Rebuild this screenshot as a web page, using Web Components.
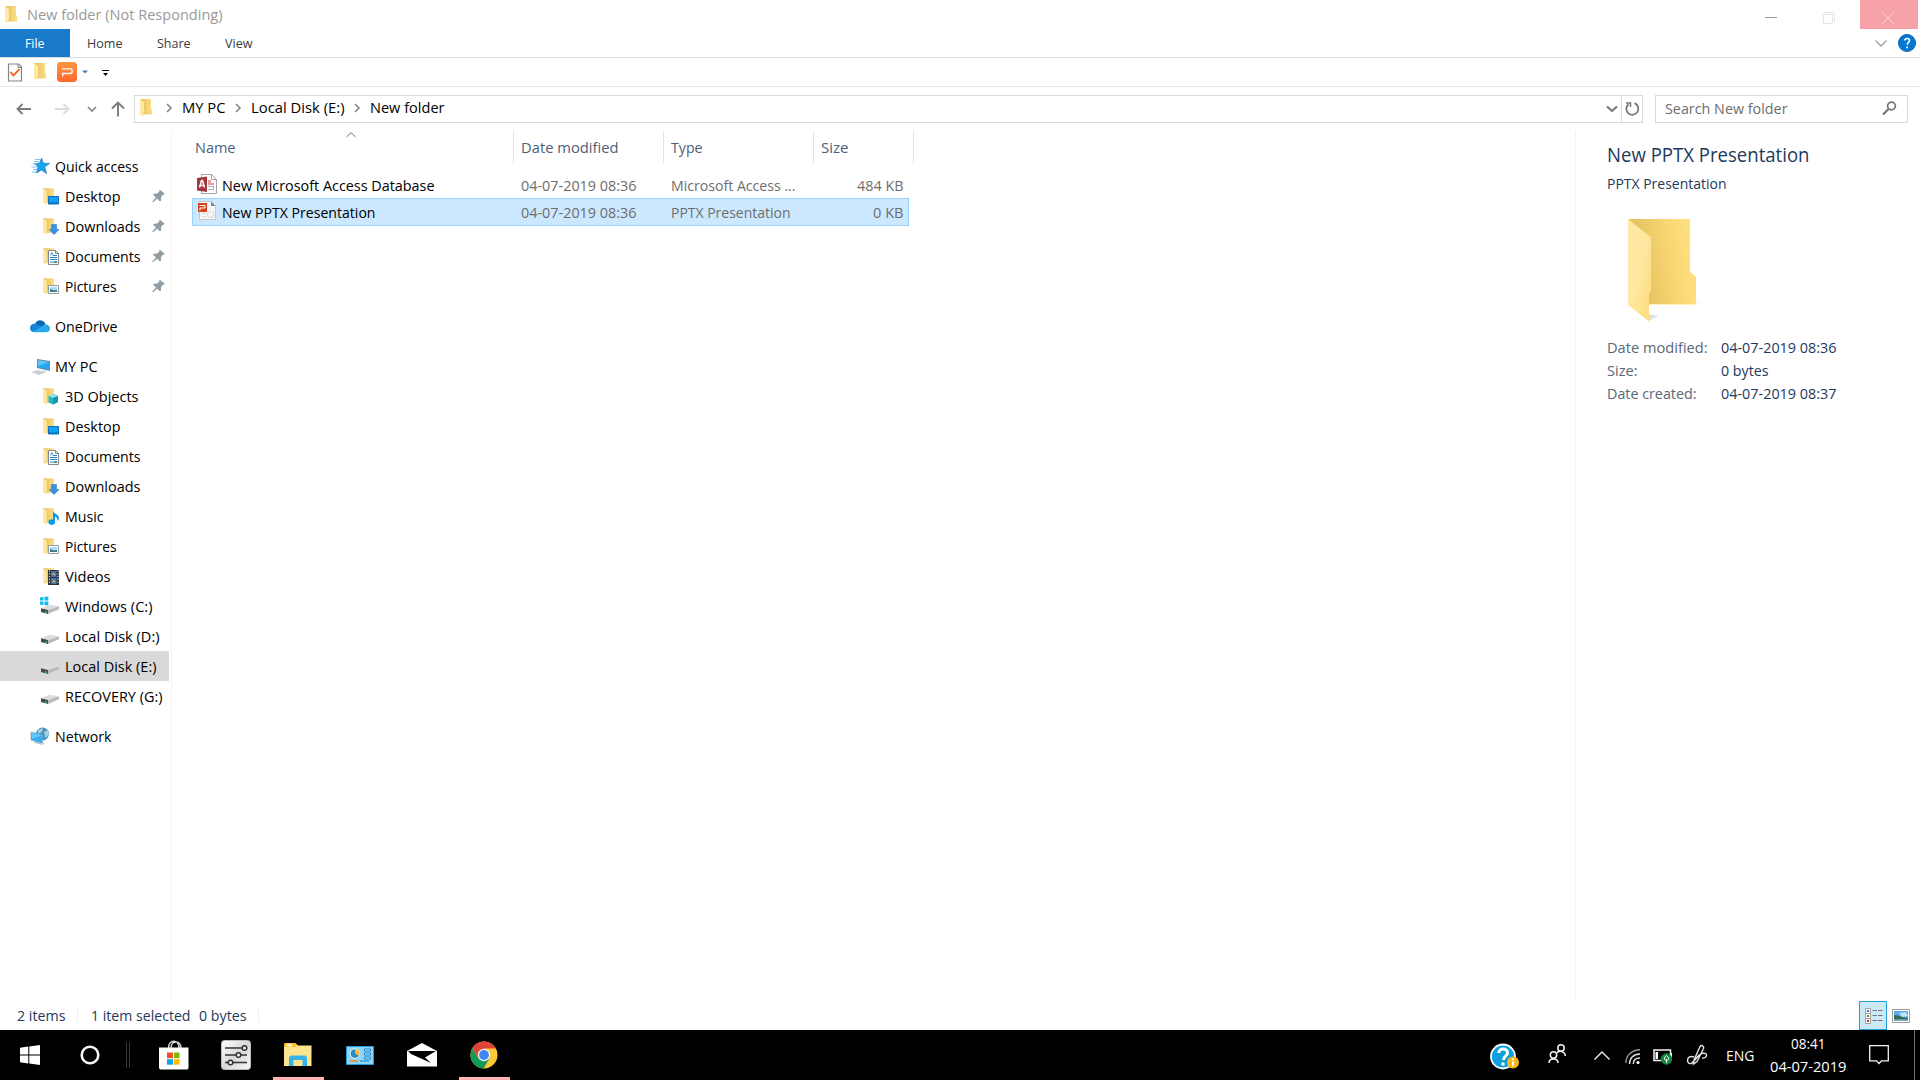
<!DOCTYPE html>
<html lang="en">
<head>
<meta charset="utf-8">
<title>New folder</title>
<style>
  body {
    margin: 0;
    width: 1920px;
    height: 1080px;
    overflow: hidden;
    background: #fff;
    font: 15px/20px "Open Sans", "Noto Sans", sans-serif;
    color: #000;
  }
</style>
</head>
<body>
<explorer-window>
  <title-bar slot="top"></title-bar>
  <ribbon-tabs slot="top"></ribbon-tabs>
  <quick-toolbar slot="top"></quick-toolbar>
  <address-row slot="top"></address-row>
  <nav-pane></nav-pane>
  <file-list></file-list>
  <preview-pane></preview-pane>
  <status-bar slot="bottom"></status-bar>
</explorer-window>
<task-bar></task-bar>

<script>
const folderPart = `
  <path d="M3 2.3H14V16.8H3z" fill="url(#f)"/>
  <path d="M3 2.3 6.8 5.2V15l-.4.5V19L3 16.4z" fill="#ffe79c"/>`;

const folderGradient = `
  <linearGradient id="f"><stop offset="0.2" stop-color="#e9c566"/><stop offset="1" stop-color="#fddf80"/></linearGradient>`;

const drivePart = `
  <path d="M1 12.300 9.500 8.700 19 10.300 8 14z" fill="#dcdcdc"/>
  <path d="M8 14 19 10.300V13.300L8 18z" fill="#b9babc"/>
  <path d="M1 12.300 8 14V18L1 16z" fill="#474a4b"/>
  <path d="M5 15.300l2 .5v1.200l-2-.5z" fill="#34e04c"/>`;

// [width, height, svg body]
const icons = {
  folder: [12, 18, `<defs><linearGradient id="a"><stop offset=".2" stop-color="#e9c566"/><stop offset="1" stop-color="#ffe084"/></linearGradient></defs>
    <path d="M0 0H11V9.5L12 10.5V15.5H0z" fill="url(#a)"/><path d="M0 0 4 3.3V12.5l-.5.5V17.5L0 14.8z" fill="#ffe9a3"/>`],
  bigFolder: [76, 103, `<defs>
      <linearGradient id="b" x1="0" y1=".6" x2="1" y2=".4"><stop offset=".2" stop-color="#e6c262"/><stop offset=".65" stop-color="#f8d873"/><stop offset="1" stop-color="#ffe083"/></linearGradient>
      <linearGradient id="c" x1="0" y1="0" x2="1" y2="1"><stop offset="0" stop-color="#ffe9a6"/><stop offset=".5" stop-color="#ffe7a0"/><stop offset="1" stop-color="#fddb78"/></linearGradient>
      <linearGradient id="s"><stop offset="0" stop-color="#ddd"/><stop offset="1" stop-color="#fff"/></linearGradient></defs>
    <path d="M67 80 77 82 66 86zM20 95 31 97 20 102z" fill="url(#s)"/>
    <path d="M0 0H61L62 1V52.5L68 58V84L67 86H0z" fill="url(#b)"/>
    <path d="M0 0 23 18.5V72L21 75V102.500L0 86z" fill="url(#c)"/><path d="M21 85.500H67" stroke="#fff0b8"/>`],
  star: [20, 20, `<path d="M11.500 2 13.300 7.200 19.500 7.500 14.700 11 16.500 17.500 11.500 14 6.500 17 8 11 4.500 7.600 9.600 7.200z" fill="#19a4ee" stroke="#2277b5" stroke-width=".7"/><path d="M5 3.500h5M4 5.500h5M3 8h4M1.500 11h5M3 13.500h4M2 16h4" stroke="#76c5f2"/>`],
  desktop: [20, 20, `${folderPart}<path d="M8.500 10.500h10v7.500h-10z" fill="#159ff5" stroke="#0870bc"/><path d="M9 17h9" stroke="#064f82" stroke-dasharray="2 1"/>`],
  downloads: [20, 20, `${folderPart}<path d="M11.500 8.500h5v5h2.500L14 18.500 9.200 13.500H11.500z" fill="#3692e5" stroke="#2778c7" stroke-width=".6"/>`],
  documents: [20, 20, `${folderPart}<path d="M8.500 4.500h7L18.500 7.500V18.500H8.500z" fill="#fff" stroke="#858a8e"/><path d="M15.500 4.500v3h3" fill="none" stroke="#858a8e"/><path d="M13 9.500h4M10 11.500h7M10 13.500h7" stroke="#2786cf"/><path d="M10.500 9.500 12 6.500 12.800 9.500" fill="none" stroke="#2786cf" stroke-width=".8"/><path d="M10 16h3" stroke="#2786cf"/><path d="M13.500 16h3.500" stroke="#558f7f" stroke-width="2"/>`],
  pictures: [20, 20, `${folderPart}<path d="M8.500 9.500h10v8h-10z" fill="#fff" stroke="#969da2"/><path d="M10 11h7v5h-7z" fill="#aadcf8"/><path d="M10 13 14 14.500 17 14v2H10z" fill="#397877"/>`],
  objects: [20, 20, `${folderPart}<path d="M8.500 10 14 8 18 10v6l-5 2.500-4.500-2z" fill="#25b6c8"/><path d="M8.500 10 14 8 18 10 13 12z" fill="#8be7ef"/><path d="M13 12 18 10v6l-5 2.500z" fill="#129aab"/>`],
  music: [20, 20, `${folderPart}<path d="M13 4c0 4 6 4 6 8 0 1-.5 2-1.500 3 .3-3-1.500-4-2.500-4.500V16a3.300 2.800 0 1 1-2-2.500z" fill="#0799ee"/>`],
  videos: [20, 20, `${folderPart}<path d="M8 4h11v15H8z" fill="#303436"/><path d="M11 5h5.500v6H11zM11 12h5.500v6H11z" fill="#3678bf"/><path d="M11.500 8.500 14 6.500 16 9.500zM11.500 16 14 13.500 16 16.500z" fill="#e8a33d"/><path d="M9.500 4.500v14M18 4.500v14" stroke="#ddd" stroke-dasharray="1.300 1.500"/>`],
  onedrive: [20, 20, `<path d="M5 8.500C6.500 3 13 3 15.500 8L10 12z" fill="#0765b8"/><path d="M0 12c0-4 4-5 6.500-4L14 12 3 16c-2-.5-3-2-3-4" fill="#1687d8"/><path d="M3 16 14.500 8.500C19 8 20 11 20 12.500 20 15 18 16.200 16 16.200H4z" fill="#28a8ea"/>`],
  pc: [20, 20, `<path d="M7 3 20 5V15L7 12z" fill="#6f8b9e"/><path d="M8 4.300 18.800 6V13.700L8 11.300z" fill="#28a8ef"/><path d="M8 4.300 18.800 6 8 10z" fill="#62c5fa"/><path d="M1 16 8 14 15 16.500 9 19zM12 14 17 15.500 14 16.500z" fill="#c9ced4"/>`],
  drive: [20, 20, drivePart],
  winDrive: [20, 20, `<path d="M0 1.500 3.500 1V4.500H0zM4.500 1 8.300.500V4.500H4.500zM0 5.500H3.500V9L0 8.500zM4.500 5.500H8.300V9.500L4.500 9z" fill="#0dbaf2"/>${drivePart}`],
  network: [20, 20, `<circle cx="12.500" cy="8" r="6.500" fill="#4594bd"/><path d="M8 4 13 2 12 6 8 8zM14 6 18 4 19 9 15 12z" fill="#a4d1df"/><path d="M1 6 12.500 9V17.500L1 14z" fill="#36adec" stroke="#6caed3" stroke-width=".7"/><path d="M1.500 6.500 12 9.500 2 13z" fill="#64c6fb"/><path d="M4 16l7 2 3-.5" stroke="#bcc5ca" stroke-width="1.500" fill="none"/>`],
  pin: [13, 14, `<path d="M7.500.5 12.500 4.500 11.500 6 10.500 6 9 8.500V11.500L8 12.500 5.200 9.700 1 13.300.2 12.600 4 8.500 1 5.800 2 4.700 5.200 4.600 7.300 2.500z" fill="#919da5"/>`],
  check: [16, 19, `<path d="M1.500 1H11.500L14.500 4V18H1.500z" fill="#fafafa" stroke="#858585" stroke-width="1.200"/><path d="M11 1v3.500h4" fill="none" stroke="#858585"/><path d="M3.500 9 6.500 12.500 12.500 6" fill="none" stroke="#f05a16" stroke-width="1.800"/>`],
  wps: [20, 20, `<defs><linearGradient id="w" x2="0" y2="1"><stop stop-color="#ff963f"/><stop offset="1" stop-color="#ff672d"/></linearGradient></defs><rect width="20" height="20" rx="3.500" fill="url(#w)"/><path d="M5 6.800H14.200L15 7.600V10.700L14.200 11.500H5.700V14.500" fill="none" stroke="#fff" stroke-width="1.300"/>`],
  smallDown: [6, 4, `<path d="M0 .500H6L3 3.500z" fill="#407abf"/>`],
  custom: [8, 7, `<path d="M0 .500h7" stroke="#000"/><path d="M1 3h5L3.500 6z" fill="#000"/>`],
  back: [16, 14, `<path d="M6.500 2 1.500 7 6.500 12M1.500 7H15" fill="none" stroke="#7b7b7b" stroke-width="1.800"/>`],
  forward: [16, 14, `<path d="M9.500 2 14.500 7 9.500 12M14.500 7H1" fill="none" stroke="#dcdcdc" stroke-width="1.800"/>`],
  recent: [10, 7, `<path d="M1 1 5 5 9 1" fill="none" stroke="#868686" stroke-width="1.700"/>`],
  up: [14, 16, `<path d="M1 7.500 7 1.500 13 7.500M7 2V15.500" fill="none" stroke="#7b7b7b" stroke-width="1.900"/>`],
  crumb: [6, 10, `<path d="M1 1 5 5 1 9" fill="none" stroke="#818181" stroke-width="1.500"/>`],
  drop: [12, 8, `<path d="M1 1.500 6 6 11 1.500" fill="none" stroke="#757575" stroke-width="2"/>`],
  refresh: [15, 15, `<path d="M9.500 2.200A6 6 0 1 1 3.500 3.200" fill="none" stroke="#777" stroke-width="1.800"/><path d="M1 2H5.500V6" fill="none" stroke="#777" stroke-width="1.500"/>`],
  search: [15, 15, `<circle cx="9.500" cy="5" r="3.900" fill="none" stroke="#747474" stroke-width="1.700"/><path d="M6.500 8 1 13.500" stroke="#747474" stroke-width="2.200"/>`],
  minimize: [12, 1, `<path d="M0 .500H12" stroke="#999"/>`],
  restore: [12, 12, `<path d="M.500 2.500H9.500V11.500H.500zM2.500 2.500V.500H11.500V9.500H9.500" fill="none" stroke="#e7e7e7"/>`],
  close: [12, 12, `<path d="M.500.500 11.500 11.500M11.500.500.500 11.500" stroke="#fdd4d6"/>`],
  ribbonDown: [12, 7, `<path d="M.500.500 6 6 11.500.500" fill="none" stroke="#9d9d9d" stroke-width="1.300"/>`],
  help: [18, 18, `<circle cx="9" cy="9" r="8.500" fill="#0078d7" stroke="#1764a5"/><path d="M6.700 6.500C7 3.800 11.500 3.800 11.500 6.500 11.500 8.300 9.200 8.400 9.200 10.800" fill="none" stroke="#fff" stroke-width="1.600"/><path d="M8.300 12.500h1.800v1.800H8.300z" fill="#fff"/>`],
  sort: [10, 6, `<path d="M.500 5 5 .700 9.500 5" fill="none" stroke="#6e6e6e"/>`],
  access: [20, 20, `<path d="M4.500.500H14.500L19.500 5.500V19.500H4.500z" fill="#fff" stroke="#a3a3a3"/><path d="M14.500.500V5.500H19.500" fill="none" stroke="#a3a3a3"/><path d="M11 6h3v3h3v2h-6z" fill="#f09ba0"/><path d="M11 12.500h5.500v3H11" fill="none" stroke="#aaa"/><path d="M0 4 10 2.500V18L0 16.500z" fill="#a4373a"/><path d="M2.500 13.500 4.500 6.500H5.500L7.500 13.500M3.500 11.500H6.500" fill="none" stroke="#fff" stroke-width="1.500"/>`],
  pptx: [20, 20, `<path d="M2.500.500H14L18.500 5V18.500H2.500z" fill="#f7f7f7" stroke="#c8c8c8"/><path d="M14 .500 18.500 5H14z" fill="#858585"/><path d="M5 12.500h4M5 15.500h4M10.500 11h6v5h-6z" fill="none" stroke="#ddd"/><path d="M1 2h9v9H1z" fill="#d5451d"/><path d="M2.500 4.500h5.500v2.500H3v2.500" fill="none" stroke="#fff"/>`],
  details: [18, 16, `<path d="M.500.500h5v15h-5zM.500 5.500h5M.500 10.500h5" fill="#fff" stroke="#a2a2a2"/><path d="M2 2h2v2H2z" fill="#2b79bf"/><path d="M2 7h2v2H2z" fill="#758b36"/><path d="M2 12h2v2H2z" fill="#b6341f"/><path d="M7.500 2.500h5M13 2.500h5M7.500 7.500h5M13 7.500h5M7.500 12.500h5M13 12.500h5" stroke="#777" stroke-dasharray="4.500 1"/>`],
  thumb: [18, 14, `<path d="M.500.500h17v13H.500z" fill="#fff" stroke="#9c9c9c"/><path d="M2 2h14v10H2z" fill="#5aa8ed"/><path d="M7 4 14 3 16 7 10 8z" fill="#bfe2f7"/><path d="M2 6 6 6.500 12 8.500 16 9v1.500H2z" fill="#376b58"/><path d="M2 10.500h14V12H2z" fill="#7cacaf"/>`],
  start: [20, 20, `<path d="M0 2.800 8.300 1.600V9.500H0zM9.300 1.500 20 0V9.500H9.300zM0 10.500H8.300V18.500L0 17.300zM9.300 10.500H20V20L9.300 18.600z" fill="#fff"/>`],
  cortana: [20, 20, `<circle cx="10" cy="10" r="8.300" fill="none" stroke="#f4f4f4" stroke-width="2.600"/>`],
  store: [30, 30, `<path d="M9.500 8C9.500-1 20-1 20 8M12 8C12 0 22 0 22 8" fill="none" stroke="#ddd" stroke-width="1.500"/><path d="M0 7.500H29.500V28L28.500 29.500H1L0 28z" fill="#fff"/><path d="M8 12.500h6v5.700H8z" fill="#f25022"/><path d="M15 12.500h5.500v5.700H15z" fill="#7fba00"/><path d="M8 19.200h6v5.500H8z" fill="#00a4ef"/><path d="M15 19.200h5.500v5.500H15z" fill="#ffb900"/>`],
  sliders: [30, 30, `<defs><linearGradient id="g" x2="1" y2="1"><stop stop-color="#fff"/><stop offset=".5" stop-color="#d8d8d8"/><stop offset="1" stop-color="#fafafa"/></linearGradient></defs><rect x=".500" y=".500" width="29" height="29" rx="3" fill="url(#g)" stroke="#bbb"/><path d="M4 8H26M4 15H26M4 22.500H26" stroke="#333" stroke-width="1.700"/><g fill="#eee" stroke="#333" stroke-width="1.500"><circle cx="23.500" cy="8" r="2.300"/><circle cx="17.500" cy="15" r="2.300"/><circle cx="9.500" cy="22.500" r="2.300"/></g>`],
  explorer: [28, 24, `<path d="M0 1.500 1 0H11L14 2.500H27.500V23H0z" fill="#ffe48f"/><path d="M0 1.500 1 0H11L13.500 2 11 4H0z" fill="#f9c52a"/><path d="M3 1.300h5v2H3z" fill="#fff"/><path d="M5 23V14L7 12.500H21L23 14V23H18.500V17H9.500V23z" fill="#36b3e9"/>`],
  panel: [28, 19, `<path d="M.500.500h27v18H.500z" fill="#8ed4f8" stroke="#239adf"/><circle cx="9" cy="7.500" r="4.800" fill="#2a88c4" stroke="#e8f9ff"/><path d="M9 7.500V2.800A4.800 4.800 0 0 1 13 10z" fill="#f8b83e"/><path d="M18.500 3h6v2h-6zM18.500 7h6v2h-6zM18.500 11h6v2h-6z" fill="#d5f3ff" stroke="#1682c6"/><path d="M4 15h8" stroke="#ef8b20" stroke-width="1.500"/><path d="M14 15h9" stroke="#1682c6"/>`],
  mail: [30, 24, `<path d="M0 8 15 0 30 8V23.500H0z" fill="#fff"/><path d="M1 8H29L18 14.500 24 20 4 11z" fill="#000"/>`],
  chrome: [28, 28, `<circle cx="14" cy="14" r="13.500" fill="#fcc934"/><path d="M2.300 7.200A13.500 13.500 0 0 1 25.700 7.500H14L8.400 17.300z" fill="#db4437"/><path d="M2.300 7.200A13.500 13.500 0 0 0 13.500 27.500L19.500 17.500 14 20 8 17z" fill="#109b58"/><circle cx="14" cy="14" r="6.200" fill="#f1f1f1"/><circle cx="14" cy="14" r="4.900" fill="#4285f4"/>`],
  assist: [30, 28, `<circle cx="13" cy="13.500" r="12" fill="#0ba1e1" stroke="#fff" stroke-width="1.800"/><path d="M8.800 10C8.800 4.500 17.500 4.500 17.500 10 17.500 13 13.500 13 13.500 17" fill="none" stroke="#fff" stroke-width="3"/><circle cx="13" cy="21" r="1.800" fill="#fff"/><circle cx="23" cy="19.500" r="6" fill="#f8b621"/><path d="M23 18.500V23M23 15.500v1.800" stroke="#fff" stroke-width="2"/>`],
  people: [18, 20, `<g fill="none" stroke="#f2f2f2" stroke-width="1.500"><circle cx="13" cy="4" r="3.200"/><circle cx="5.500" cy="11" r="3.200"/><path d="M1 19C1 13.500 10 13.500 10 19M9 8.500C13 6 17 8 17.300 12"/></g>`],
  trayUp: [16, 9, `<path d="M.500 8.500 8 1 15.500 8.500" fill="none" stroke="#f0f0f0" stroke-width="1.400"/>`],
  wifi: [16, 16, `<g fill="none" stroke-width="1.400"><path d="M.800 14C1 6 7 1 15 .800" stroke="#999"/><path d="M4.500 15C4.500 9 8.500 5 15 5M8.300 15C8.300 11.500 10.500 9 15 9" stroke="#ddd"/></g><circle cx="13" cy="13.500" r="1.600" fill="#fff"/>`],
  battery: [20, 16, `<path d="M1 1H17.500V11.500H1z" fill="none" stroke="#f4f4f4" stroke-width="1.500"/><path d="M2.500 3H5v7H2.500z" fill="#fff"/><path d="M18.500 4v5" stroke="#fff"/><circle cx="13.500" cy="10" r="5.700" fill="#10893e"/><path d="M13.500 14V10M11.500 10C11 8 13 7.500 13.500 6.500 14 7.500 16 8 15.500 10 15 12 12 12 11.500 10z" fill="none" stroke="#fff"/>`],
  pen: [20, 21, `<path d="M13 1.500C14.500-.500 17.500 1 16.500 3.500L10 16.500 6.500 19 7 15zM7 12C-1 9-1 20 4 18.500 8 17 10 10 15 8.500 22 7 20 14 15 13" fill="none" stroke="#e3e3e3" stroke-width="1.400"/>`],
  action: [20, 20, `<path d="M.700.700H19.300V15.800H12.500L10 18.500 7.500 15.800H.700z" fill="none" stroke="#f5f5f5" stroke-width="1.300"/>`],
};

class WinIcon extends HTMLElement {
  constructor() {
    super();
    this.attachShadow({ mode: "open" });
  }

  connectedCallback() {
    const [w, h, body] = icons[this.getAttribute("name")];
    this.shadowRoot.innerHTML = `
      <style>
        :host { display: block; flex: none; width: ${w}px; height: ${h}px; }
        svg { display: block; overflow: visible; }
      </style>
      <svg width="${w}" height="${h}" viewBox="0 0 ${w} ${h}"><defs>${folderGradient}</defs>${body}</svg>
    `;
  }
}
customElements.define("win-icon", WinIcon);

// Label squeezed to the width given in its "w" attribute.
// --dy nudges the baseline.
class FitText extends HTMLElement {
  constructor() {
    super();
    this.attachShadow({ mode: "open" });
  }

  connectedCallback() {
    const w = Number(this.getAttribute("w"));
    this.shadowRoot.innerHTML = `
      <style>
        :host { display: block; flex: none; width: ${w}px; white-space: nowrap; }
        span { display: inline-block; transform-origin: 0 50%; }
      </style>
      <span><slot></slot></span>
    `;
    const span = this.shadowRoot.querySelector("span");
    const scale = (w + 0.5) / span.getBoundingClientRect().width;
    span.style.transform = `translateY(var(--dy, -1px)) scaleX(${scale})`;
  }
}
customElements.define("fit-text", FitText);

const define = (name, css, html) => {
  customElements.define(
    name,
    class extends HTMLElement {
      constructor() {
        super();
        this.attachShadow({ mode: "open" });
      }

      connectedCallback() {
        this.shadowRoot.innerHTML = `<style>${css}</style>${html}`;
      }
    },
  );
};

define(
  "explorer-window",
  `
  :host { display: flex; flex-direction: column; height: 1030px; background: #fff; }
  .body { flex: 1; display: flex; min-height: 0; }
  `,
  `<slot name="top"></slot><div class="body"><slot></slot></div><slot name="bottom"></slot>`,
);

define(
  "title-bar",
  `
  :host { display: flex; height: 29px; color: #999; }
  .folder { margin: 6px 10px 0 5px; }
  fit-text { margin-top: 5px; }
  .buttons { margin-left: auto; display: flex; }
  .min { margin: 17px 46px 0 0; }
  .restore { margin: 12px 25px 0 0; }
  .close { width: 58px; height: 29px; margin-right: 2px; background: #f7a1a8; display: grid; justify-content: center; padding-top: 12px; box-sizing: border-box; }
  .close win-icon { margin-right: 2px; }
  `,
  `
  <win-icon class="folder" name="folder"></win-icon>
  <fit-text w="195">New folder (Not Responding)</fit-text>
  <div class="buttons">
    <win-icon class="min" name="minimize"></win-icon>
    <win-icon class="restore" name="restore"></win-icon>
    <div class="close"><win-icon name="close"></win-icon></div>
  </div>
  `,
);

define(
  "ribbon-tabs",
  `
  :host { --dy: 0px; display: flex; height: 28px; border-bottom: 1px solid #dadbdc; font-size: 13px; line-height: 29px; color: #3b3b3b; }
  .file { width: 69px; padding-right: 1px; background: #1979ca; color: #fff; display: flex; justify-content: center; }
  .home { margin-left: 17px; }
  .share { margin-left: 35px; }
  .view { margin-left: 35px; }
  .down { margin: 11px 11px 0 auto; }
  .help { margin: 5px 4px 0 0; }
  `,
  `
  <div class="file"><fit-text w="19">File</fit-text></div>
  <fit-text class="home" w="35">Home</fit-text>
  <fit-text class="share" w="33">Share</fit-text>
  <fit-text class="view" w="27">View</fit-text>
  <win-icon class="down" name="ribbonDown"></win-icon>
  <win-icon class="help" name="help"></win-icon>
  `,
);

define(
  "quick-toolbar",
  `
  :host { display: flex; align-items: center; height: 28px; border-bottom: 1px solid #e7e7e7; padding-left: 7px; }
  .folder { margin: 0 11px; }
  .down { margin: 0 14px 0 5px; }
  .custom { margin-top: 3px; }
  `,
  `
  <win-icon name="check"></win-icon>
  <win-icon class="folder" name="folder"></win-icon>
  <win-icon name="wps"></win-icon>
  <win-icon class="down" name="smallDown"></win-icon>
  <win-icon class="custom" name="custom"></win-icon>
  `,
);

define(
  "address-row",
  `
  :host { display: flex; align-items: center; height: 44px; padding: 0 12px 0 16px; box-sizing: border-box; }
  .forward { margin-left: 22px; }
  .recent { margin-left: 17px; }
  .up { margin: 0 9px 0 14px; }
  .box { display: flex; align-items: center; box-sizing: border-box; height: 28px; border: 1px solid #d9d9d9; margin-bottom: 1px; }
  .address { width: 1509px; padding-left: 5px; }
  .folder { margin: 0 14px 2px 0; }
  .crumbs { display: flex; align-items: center; gap: 10px; margin-bottom: 2px; }
  .drop { margin-left: auto; margin-right: 3px; }
  .refresh { height: 26px; width: 20px; border-left: 1px solid #d9d9d9; display: grid; place-items: center; }
  .search { width: 253px; margin-left: auto; padding: 0 11px 0 9px; justify-content: space-between; color: #6d6d6d; }
  .search win-icon { margin-right: -1px; }
  `,
  `
  <win-icon name="back"></win-icon>
  <win-icon class="forward" name="forward"></win-icon>
  <win-icon class="recent" name="recent"></win-icon>
  <win-icon class="up" name="up"></win-icon>
  <div class="box address">
    <win-icon class="folder" name="folder"></win-icon>
    <div class="crumbs">
      <win-icon name="crumb"></win-icon><fit-text w="43">MY PC</fit-text>
      <win-icon name="crumb"></win-icon><fit-text w="93">Local Disk (E:)</fit-text>
      <win-icon name="crumb"></win-icon><fit-text w="74">New folder</fit-text>
    </div>
    <win-icon class="drop" name="drop"></win-icon>
    <div class="refresh"><win-icon name="refresh"></win-icon></div>
  </div>
  <div class="box search"><fit-text w="122">Search New folder</fit-text><win-icon name="search"></win-icon></div>
  `,
);

define(
  "nav-item",
  `
  :host { display: flex; align-items: center; width: 169px; height: 30px; padding-left: 30px; gap: 5px; box-sizing: border-box; }
  :host([child]) { padding-left: 40px; gap: 5px; }
  :host([selected]) { background: #d9d9d9; }
  ::slotted(fit-text) { margin-top: 1px; }
  ::slotted(.pin) { margin-left: auto; margin-right: 4px; }
  `,
  `<slot></slot>`,
);

const navGroups = [
  [
    ["star", "Quick access", 83],
    ["desktop", "Desktop", 55, "pin"],
    ["downloads", "Downloads", 75, "pin"],
    ["documents", "Documents", 75, "pin"],
    ["pictures", "Pictures", 51, "pin"],
  ],
  [["onedrive", "OneDrive", 62]],
  [
    ["pc", "MY PC", 42],
    ["objects", "3D Objects", 73],
    ["desktop", "Desktop", 55],
    ["documents", "Documents", 75],
    ["downloads", "Downloads", 75],
    ["music", "Music", 38],
    ["pictures", "Pictures", 51],
    ["videos", "Videos", 45],
    ["winDrive", "Windows (C:)", 87],
    ["drive", "Local Disk (D:)", 94],
    ["drive", "Local Disk (E:)", 91],
    ["drive", "RECOVERY (G:)", 97],
  ],
  [["network", "Network", 56]],
];
navGroups[2][10].push("selected");

const navItem = ([icon, text, w, flag], i) => `
  <nav-item ${i ? "child" : ""} ${flag === "selected" ? "selected" : ""}>
    <win-icon name="${icon}"></win-icon><fit-text w="${w}">${text}</fit-text>
    ${flag === "pin" ? '<win-icon class="pin" name="pin"></win-icon>' : ""}
  </nav-item>`;

define(
  "nav-pane",
  `
  :host { display: flex; flex-direction: column; gap: 10px; width: 171px; padding-top: 20px; border-right: 1px solid #f3f3f3; }
  `,
  navGroups.map((group) => `<div>${group.map(navItem).join("")}</div>`).join(""),
);

define(
  "file-list",
  `
  :host { display: block; flex: 1; padding-left: 20px; }
  .head { display: grid; grid-template-columns: 322px 150px 150px 100px; height: 32px; color: #4c607a; }
  .head div { border-right: 1px solid #e2e2e2; padding: 7px 0 0 7px; position: relative; }
  .head div:first-child { padding-left: 3px; }
  .sort { position: absolute; left: 154px; top: 1px; }
  .rows { padding-top: 8px; }
  .row { display: grid; grid-template-columns: 328px 150px 150px 82px; align-items: center; box-sizing: border-box; width: 717px; height: 28px; border: 1px solid transparent; color: #6d6d6d; }
  .row + .row { margin-top: -1px; }
  .row.selected { background: #cce8ff; border-color: #99d1ff; }
  .row fit-text { margin-top: 2px; }
  .name { display: flex; align-items: center; gap: 5px; padding-left: 4px; color: #000; }
  .name win-icon { margin-bottom: 2px; }
  .size { justify-self: end; }
  `,
  `
  <div class="head">
    <div><fit-text w="40">Name</fit-text><win-icon class="sort" name="sort"></win-icon></div>
    <div><fit-text w="97">Date modified</fit-text></div>
    <div><fit-text w="31">Type</fit-text></div>
    <div><fit-text w="27">Size</fit-text></div>
  </div>
  <div class="rows">
    <div class="row">
      <div class="name"><win-icon name="access"></win-icon><fit-text w="212">New Microsoft Access Database</fit-text></div>
      <fit-text w="115">04-07-2019 08:36</fit-text>
      <fit-text w="124">Microsoft Access ...</fit-text>
      <fit-text class="size" w="46">484 KB</fit-text>
    </div>
    <div class="row selected">
      <div class="name"><win-icon name="pptx"></win-icon><fit-text w="153">New PPTX Presentation</fit-text></div>
      <fit-text w="115">04-07-2019 08:36</fit-text>
      <fit-text w="119">PPTX Presentation</fit-text>
      <fit-text class="size" w="30">0 KB</fit-text>
    </div>
  </div>
  `,
);

define(
  "preview-pane",
  `
  :host { display: block; width: 313px; padding-left: 31px; border-left: 1px solid #f3f3f3; color: #1e395b; }
  .title { --dy: 0px; font-size: 20px; line-height: 26px; padding-top: 11px; }
  .type { margin-top: 6px; }
  .folder { margin: 25px 0 14px 21px; }
  .info { --dy: 0px; display: grid; grid-template-columns: 113.5px auto; grid-auto-rows: 23px; line-height: 23px; }
  .info .label { color: #5a6779; }
  `,
  `
  <fit-text class="title" w="202">New PPTX Presentation</fit-text>
  <fit-text class="type" w="119">PPTX Presentation</fit-text>
  <win-icon class="folder" name="bigFolder"></win-icon>
  <div class="info">
    <fit-text class="label" w="100">Date modified:</fit-text><fit-text w="115">04-07-2019 08:36</fit-text>
    <fit-text class="label" w="30">Size:</fit-text><fit-text w="47">0 bytes</fit-text>
    <fit-text class="label" w="89">Date created:</fit-text><fit-text w="115">04-07-2019 08:37</fit-text>
  </div>
  `,
);

define(
  "status-bar",
  `
  :host { display: flex; align-items: center; height: 29px; padding: 0 10px 0 17px; color: #1e395b; }
  i { width: 1px; height: 13px; background: #eee; margin: 0 13px 0 12px; }
  .bytes { margin-left: 9px; }
  .details { margin-left: auto; margin-right: 5px; width: 28px; height: 29px; box-sizing: border-box; border: 1px solid #26a0da; background: #cbe8f6; display: grid; place-items: center; }
  .details win-icon { margin: 1px 0 0 2px; }
  `,
  `
  <fit-text w="48">2 items</fit-text><i></i>
  <fit-text w="99">1 item selected</fit-text><fit-text class="bytes" w="47">0 bytes</fit-text><i></i>
  <div class="details"><win-icon name="details"></win-icon></div>
  <win-icon name="thumb"></win-icon>
  `,
);

define(
  "task-button",
  `
  :host { display: grid; place-items: center; width: 62px; height: 50px; box-sizing: border-box; }
  :host([running]) { background: linear-gradient(#ffb3b3, #ffb3b3) 6px 47px / 51px 3px no-repeat; }
  `,
  `<slot></slot>`,
);

define(
  "task-bar",
  `
  :host { display: flex; align-items: center; height: 50px; background: #000; color: #fff; }
  .start { margin-left: 20px; }
  .cortana { margin-left: 40px; }
  .sep { width: 2px; height: 26px; margin: 0 13px 0 26px; border: solid #3b3b3b; border-width: 0 1px; }
  .tray { margin-left: auto; display: flex; align-items: center; height: 50px; }
  .assist { margin: 4px 28px 0 0; }
  .people { margin: 0 28px 2px 0; }
  .up { margin-right: 15px; }
  .wifi { margin: 3px 12px 0 0; }
  .battery { margin: 4px 14px 0 0; }
  .pen { margin-right: 19px; }
  .lang { margin-right: 16px; margin-top: 1px; }
  .clock { --dy: 0px; display: grid; justify-items: center; row-gap: 3px; margin: -1px 23px 0 0; }
  .action { margin-right: 25px; }
  .edge { width: 1px; height: 50px; background: #707070; margin-right: 5px; }
  `,
  `
  <win-icon class="start" name="start"></win-icon>
  <win-icon class="cortana" name="cortana"></win-icon>
  <div class="sep"></div>
  <task-button><win-icon name="store"></win-icon></task-button>
  <task-button><win-icon name="sliders"></win-icon></task-button>
  <task-button running><win-icon name="explorer"></win-icon></task-button>
  <task-button><win-icon name="panel"></win-icon></task-button>
  <task-button><win-icon name="mail"></win-icon></task-button>
  <task-button running><win-icon name="chrome"></win-icon></task-button>
  <div class="tray">
    <win-icon class="assist" name="assist"></win-icon>
    <win-icon class="people" name="people"></win-icon>
    <win-icon class="up" name="trayUp"></win-icon>
    <win-icon class="wifi" name="wifi"></win-icon>
    <win-icon class="battery" name="battery"></win-icon>
    <win-icon class="pen" name="pen"></win-icon>
    <fit-text class="lang" w="28">ENG</fit-text>
    <div class="clock"><fit-text w="34">08:41</fit-text><fit-text w="76">04-07-2019</fit-text></div>
    <win-icon class="action" name="action"></win-icon>
    <div class="edge"></div>
  </div>
  `,
);
</script>
</body>
</html>
